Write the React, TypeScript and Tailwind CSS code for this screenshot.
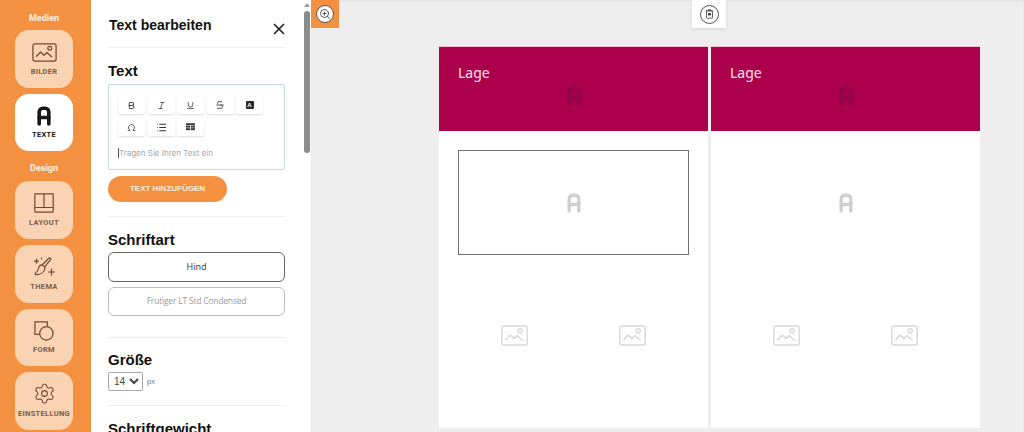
import React from "react";
import { ZoomIn, X, Bold, Italic, Underline, Strikethrough, Omega, List, Settings } from "lucide-react";

function LetterA({ className = "", sw = 3.4 }: { className?: string; sw?: number }) {
  return (
    <svg viewBox="0 0 14 20" className={className} fill="none" stroke="currentColor" strokeWidth={sw} strokeLinecap="round" strokeLinejoin="round">
      <path d="M2.2 18V6a3.8 3.8 0 0 1 3.8-3.8h2A3.8 3.8 0 0 1 11.8 6v12" />
      <path d="M2.2 11.5h9.6" />
    </svg>
  );
}

function ImageIcon({ className = "", sw = 1.4 }: { className?: string; sw?: number }) {
  return (
    <svg viewBox="0 0 26 20" className={className} fill="none" stroke="currentColor" strokeWidth={sw} strokeLinecap="round" strokeLinejoin="round">
      <rect x="0.8" y="0.8" width="24.4" height="18.4" rx="2" />
      <path d="M4.5 14l4.5-4.5 3.5 3.5 3-3 5 4.5" />
      <circle cx="18.5" cy="5.5" r="2" />
    </svg>
  );
}

function LayoutIcon({ className = "" }: { className?: string }) {
  return (
    <svg viewBox="0 0 20 20" className={className} fill="none" stroke="currentColor" strokeWidth="1.2">
      <rect x="0.8" y="0.8" width="18.4" height="18.4" rx="0.6" />
      <path d="M0.8 14.5h18.4M10 0.8v13.7" />
    </svg>
  );
}

function FormIcon({ className = "" }: { className?: string }) {
  return (
    <svg viewBox="0 0 21 21" className={className} fill="none" stroke="currentColor" strokeWidth="1.3">
      <path d="M6 14H1V1h13v4.5" />
      <circle cx="13" cy="13" r="7" />
    </svg>
  );
}

function ThemeIcon({ className = "" }: { className?: string }) {
  return (
    <svg viewBox="0 0 22 20" className={className} fill="none" stroke="currentColor" strokeWidth="1.2" strokeLinecap="round" strokeLinejoin="round">
      <path d="M16 1.2c.9-.7 2.3.5 1.6 1.5l-6 7.2-2.4-2.1z" />
      <path d="M9.2 7.8c-2 .2-3.2 1.3-3.6 3.2-.3 1.7-1.3 3.6-3.3 5.4-.5.6-.1 1.3.7 1.3 3.5 0 7.5-1.8 8.6-5.1.4-1.1.3-2-.1-2.7" />
      <path d="M3.5 2.2v4M1.5 4.2h4M8.6 1.1v.8M18.5 12v6M15.5 15h6" />
    </svg>
  );
}

function BinIcon({ className = "" }: { className?: string }) {
  return (
    <svg viewBox="0 0 12 13" className={className} fill="none" stroke="currentColor" strokeWidth="1.1" strokeLinejoin="round">
      <path d="M4 2V.9h4V2" />
      <path d="M1 2.3h10" />
      <rect x="2" y="2.3" width="8" height="9.9" rx="0.8" />
      <rect x="4" y="5.2" width="4" height="3.2" fill="currentColor" stroke="none" />
    </svg>
  );
}

function TableIcon({ className = "" }: { className?: string }) {
  return (
    <svg viewBox="0 0 12 10" className={className} fill="#333">
      <rect x="0" y="0" width="12" height="2.4" />
      <rect x="0" y="3.2" width="5.5" height="2.6" />
      <rect x="6.5" y="3.2" width="5.5" height="2.6" />
      <rect x="0" y="6.6" width="5.5" height="2.6" />
      <rect x="6.5" y="6.6" width="5.5" height="2.6" />
    </svg>
  );
}

function SideButton({ label, active, children }: { label: string; active?: boolean; children: React.ReactNode }) {
  return (
    <div className={`w-[58px] h-[57.7px] rounded-[14px] flex flex-col items-center ${active ? "bg-white text-[#17171c]" : "bg-[#fad3b3] text-[#6d4a35]"}`}>
      <div className="h-[32px] w-full flex items-end justify-center">{children}</div>
      <div className={`mt-[4.5px] text-[7.5px] leading-[9px] font-bold tracking-[0.3px] font-['Roboto',sans-serif] whitespace-nowrap ${active ? "" : "text-[#7d5e4a]"}`}>{label}</div>
    </div>
  );
}

function Tool({ children }: { children: React.ReactNode }) {
  return (
    <div className="w-[27px] h-[18px] rounded-[2px] bg-white shadow-[0_1px_2px_rgba(0,0,0,0.14)] flex items-center justify-center text-[#333]">
      {children}
    </div>
  );
}

function Divider() {
  return <div className="h-px bg-[#eeeeee]" />;
}

function Heading({ children }: { children: React.ReactNode }) {
  return <div className="text-[15px] leading-[18px] font-bold text-[#111] font-['Liberation_Sans',sans-serif]">{children}</div>;
}

function Column({ selected }: { selected?: boolean }) {
  return (
    <div className="w-[269px] h-full bg-white flex flex-col">
      <div className="h-[85px] bg-[#ad004c] px-[19px] pt-[17px] flex flex-col border-t border-[#f8bcd6]">
        <div className="text-[14px] leading-[18px] text-[#fbe3ee] font-['Noto_Sans',sans-serif]">Lage</div>
        <div className="flex justify-center mt-[4px]">
          <LetterA className="w-[14px] h-[20px] text-[#8e0743]" />
        </div>
      </div>
      <div className="mx-[19px] mt-[19px] h-[105px] flex items-center justify-center">
        <div className={`w-full h-full flex items-center justify-center ${selected ? "border-[1.5px] border-[#707070]" : ""}`}>
          <LetterA className="w-[14px] h-[22px] text-[#cfcfcf]" />
        </div>
      </div>
      <div className="flex justify-between px-[62px] mt-[70px]">
        <ImageIcon className="w-[27px] h-[21px] text-[#d9d9d9]" />
        <ImageIcon className="w-[27px] h-[21px] text-[#d9d9d9]" />
      </div>
    </div>
  );
}

export default function App() {
  return (
    <div className="flex w-[1024px] h-[432px] overflow-hidden bg-white font-['Liberation_Sans',sans-serif]">
      {/* Sidebar */}
      <aside className="w-[91px] shrink-0 bg-[#f49140] flex flex-col items-center pr-[3px]">
        <div className="mt-[13px] h-[11px] text-[9px] leading-[11px] font-bold text-[#fdf0e4] font-['Roboto',sans-serif]">Medien</div>
        <div className="mt-[6px] flex flex-col gap-[6px]">
          <SideButton label="BILDER"><ImageIcon className="w-[25px] h-[19px]" sw={1.3} /></SideButton>
          <SideButton label="TEXTE" active><LetterA className="w-[14px] h-[20px]" sw={3.6} /></SideButton>
        </div>
        <div className="mt-[12px] h-[11px] text-[9px] leading-[11px] font-bold text-[#fdf0e4] font-['Roboto',sans-serif]">Design</div>
        <div className="mt-[7px] flex flex-col gap-[6px]">
          <SideButton label="LAYOUT"><LayoutIcon className="w-[20px] h-[20px]" /></SideButton>
          <SideButton label="THEMA"><ThemeIcon className="w-[22px] h-[20px]" /></SideButton>
          <SideButton label="FORM"><FormIcon className="w-[20px] h-[20px]" /></SideButton>
          <SideButton label="EINSTELLUNG"><Settings className="w-[23px] h-[23px] mb-[-1px]" strokeWidth={1.15} /></SideButton>
        </div>
      </aside>

      {/* Panel */}
      <section className="w-[220px] shrink-0 flex">
        <div className="w-[212px] pl-[17px] pr-[18px] overflow-hidden h-[432px] shrink-0">
          <div className="w-[177px]">
            <div className="flex justify-between pt-[17px] h-[47px]">
              <div className="ml-[1px] text-[14px] leading-[17px] font-bold text-[#111]">Text bearbeiten</div>
              <X className="w-[18px] h-[18px] mt-[3px] mr-[-3px] text-[#222]" strokeWidth={2.2} />
            </div>
            <Divider />
            <div className="mt-[14px]"><Heading>Text</Heading></div>
            <div className="mt-[4px] h-[86px] border border-[#c7d9e6] rounded-[2px] px-[9px] pt-[11px]">
              <div className="flex flex-wrap gap-x-[2.5px] gap-y-[4px] w-[150px]">
                <Tool><Bold className="w-[9px] h-[9px]" strokeWidth={2.4} /></Tool>
                <Tool><Italic className="w-[9px] h-[9px]" /></Tool>
                <Tool><Underline className="w-[9px] h-[9px]" /></Tool>
                <Tool><Strikethrough className="w-[10px] h-[10px]" /></Tool>
                <Tool>
                  <span className="w-[8px] h-[8px] bg-[#2a2a2a] rounded-[1px] text-white text-[6px] leading-[8px] font-bold text-center">A</span>
                </Tool>
                <Tool><Omega className="w-[9px] h-[9px]" strokeWidth={2.2} /></Tool>
                <Tool><List className="w-[11px] h-[11px]" strokeWidth={2.2} /></Tool>
                <Tool><TableIcon className="w-[9px] h-[8px]" /></Tool>
              </div>
              <div className="mt-[11px] flex items-center h-[12px] text-[8px] text-[#a8a8a8] font-['Inter',sans-serif]">
                <span className="w-px h-[10px] bg-[#555]" />Tragen Sie Ihren Text ein
              </div>
            </div>
            <div className="mt-[6px] w-[119px] h-[26px] rounded-full bg-[#f49140] flex items-center justify-center text-[8px] font-bold text-[#fdeedd]">TEXT HINZUFÜGEN</div>
            <div className="mt-[14px]"><Divider /></div>
            <div className="mt-[14px]"><Heading>Schriftart</Heading></div>
            <div className="mt-[3px] h-[30px] rounded-[6px] border border-[#666] flex items-center justify-center text-[9px] text-[#333] font-['Open_Sans',sans-serif]">Hind</div>
            <div className="mt-[5px] h-[29px] rounded-[6px] border border-[#bdbdbd] flex items-center justify-center text-[8.5px] text-[#9a9a9a] font-['Open_Sans',sans-serif] tracking-[-0.2px]">Frutiger LT Std Condensed</div>
            <div className="mt-[21px]"><Divider /></div>
            <div className="mt-[13px]"><Heading>Größe</Heading></div>
            <div className="mt-[3px] flex items-center">
              <select defaultValue="14" className="w-[35px] h-[19px] border border-[#a8a8a8] rounded-[2px] text-[10px] text-[#444] pl-[1px] bg-white font-['Liberation_Sans',sans-serif]">
                <option value="14">14</option>
              </select>
              <span className="ml-[4px] text-[7.5px] text-[#777]">px</span>
            </div>
            <div className="mt-[14px]"><Divider /></div>
            <div className="mt-[14px]"><Heading>Schriftgewicht</Heading></div>
          </div>
        </div>
        {/* Scrollbar */}
        <div className="w-[8px] h-[432px] flex flex-col items-center pt-[3px] pr-[1px]">
          <div className="w-0 h-0 border-x-[3px] border-x-transparent border-b-[4px] border-b-[#9a9a9a]" />
          <div className="mt-[4px] w-[6px] h-[142px] rounded-[3px] bg-[#8b8b8b]" />
        </div>
      </section>

      {/* Canvas */}
      <main className="relative flex-1 bg-[#eeeeee] pl-[128px] pt-[46px] pb-[4px] shadow-[inset_0_1px_2px_rgba(0,0,0,0.08)]">
        <div className="absolute left-0 top-0 w-[28px] h-[28px] bg-[#f49140] flex items-center justify-center">
          <div className="w-[18px] h-[18px] rounded-full bg-white border border-[#555] flex items-center justify-center">
            <ZoomIn className="w-[12px] h-[12px] text-[#333]" strokeWidth={1.6} />
          </div>
        </div>
        <div className="absolute left-[381px] top-0 w-[34px] h-[28px] bg-white shadow-[0_1px_3px_rgba(0,0,0,0.1)] flex items-center justify-center">
          <div className="w-[19px] h-[19px] rounded-full border border-[#555] flex items-center justify-center">
            <BinIcon className="w-[9px] h-[10px] text-[#444]" />
          </div>
        </div>
        <div className="flex gap-[3px] w-[541px] h-full">
          <Column selected />
          <Column />
        </div>
      </main>
    </div>
  );
}
